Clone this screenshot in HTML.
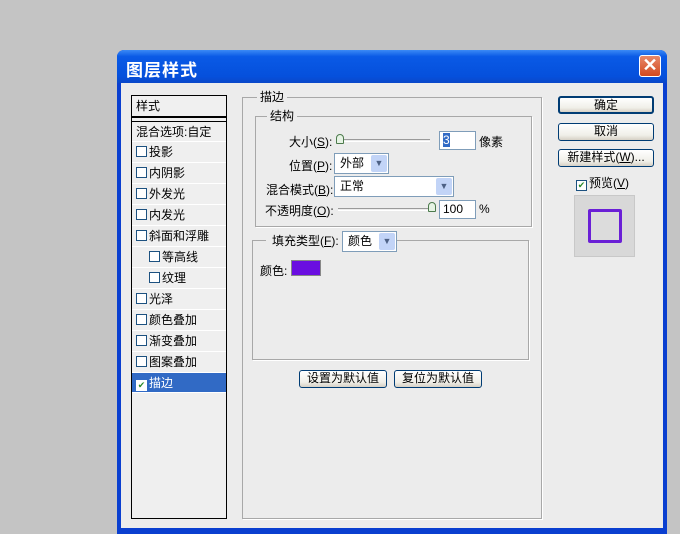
<!DOCTYPE html>
<html><head><meta charset="utf-8"><style>
*{margin:0;padding:0;box-sizing:border-box}
body{width:680px;height:532px;background:#c4c4c4;position:relative;overflow:hidden;font-family:"Liberation Sans","Noto Sans CJK SC",sans-serif;font-size:12px;color:#000}
.a{position:absolute}
.dlg{left:117px;top:50px;width:550px;height:484px;background:#0a3fd0;border-radius:7px 7px 0 0;}
.title{left:117px;top:50px;width:550px;height:33px;border-radius:7px 7px 0 0;background:linear-gradient(#3b8af5,#0a5ae6 20%,#0550dc 80%,#0a47c8);color:#fff;font-size:17px;font-weight:bold;padding:6px 0 0 9px;letter-spacing:1px}
.body{left:121px;top:83px;width:542px;height:445px;background:#ececec}
.close{left:639px;top:55px;width:22px;height:22px;border:1px solid #fff;border-radius:3px;background:linear-gradient(#e8886a,#d2491f);color:#fff;font-size:18px;line-height:19px;text-align:center;font-weight:bold}
.list{left:131px;top:95px;width:96px;height:424px;border:1px solid #000;background:#efefef}
.row{position:absolute;left:0;width:94px;height:21px;border-bottom:1px solid #fff;line-height:20px;padding-left:4px}
.cb{display:inline-block;width:11px;height:11px;border:1px solid #1c5180;background:#fff;vertical-align:-1px;margin-right:2px}
.grp{border:1px solid #a8a8a8;box-shadow:1px 1px 0 #fff}
.lbl{background:#ececec;padding:0 3px;position:absolute;line-height:14px}
.btn{position:absolute;border:1px solid #003c74;border-radius:3px;background:linear-gradient(#fff,#f0efe8 70%,#d6d0c5);text-align:center;line-height:15px;font-size:12px}
.sel{position:absolute;border:1px solid #7f9db9;background:#fff;height:21px;line-height:19px;padding-left:5px}
.arr{position:absolute;right:1px;top:1px;width:16px;height:17px;background:#c2d4f7;border-radius:2px;color:#4d6185;font-size:9px;text-align:center;line-height:17px}
.inp{position:absolute;border:1px solid #7f9db9;background:#fff;height:19px;line-height:17px;padding-left:3px}
.track{position:absolute;height:3px;border-top:1px solid #9a9a9a;border-bottom:1px solid #fff}
.thumb{position:absolute;width:8px;height:10px;border:1px solid #4c7a4c;background:#e6f3e4;border-radius:4px 4px 1px 1px}
</style></head><body>
<div class="a dlg"></div>
<div class="a title">图层样式</div>
<div class="a close">✕</div>
<div class="a body"></div>

<div class="a list">
 <div class="row" style="top:0;height:22px;border-bottom:2px solid #000;background:#f0f0f0">样式</div>
 <div class="row" style="top:25px;height:21px;border-top:1px solid #000">混合选项:自定</div>
 <div class="row" style="top:46px"><span class="cb"></span>投影</div>
 <div class="row" style="top:67px"><span class="cb"></span>内阴影</div>
 <div class="row" style="top:88px"><span class="cb"></span>外发光</div>
 <div class="row" style="top:109px"><span class="cb"></span>内发光</div>
 <div class="row" style="top:130px"><span class="cb"></span>斜面和浮雕</div>
 <div class="row" style="top:151px;padding-left:17px"><span class="cb"></span>等高线</div>
 <div class="row" style="top:172px;padding-left:17px"><span class="cb"></span>纹理</div>
 <div class="row" style="top:193px"><span class="cb"></span>光泽</div>
 <div class="row" style="top:214px"><span class="cb"></span>颜色叠加</div>
 <div class="row" style="top:235px"><span class="cb"></span>渐变叠加</div>
 <div class="row" style="top:256px"><span class="cb"></span>图案叠加</div>
 <div class="row" style="top:277px;height:20px;background:#316ac5;color:#fff"><span class="cb" style="border-color:#fff;color:#2a8a2a;font-size:9px;line-height:9px;text-align:center">✔</span>描边</div>
</div>

<div class="a grp" style="left:242px;top:97px;width:300px;height:422px"></div>
<div class="lbl" style="left:257px;top:90px">描边</div>
<div class="a grp" style="left:255px;top:116px;width:277px;height:111px"></div>
<div class="lbl" style="left:267px;top:109px">结构</div>

<div class="a" style="left:289px;top:133px">大小(<u>S</u>):</div>
<div class="track" style="left:340px;top:139px;width:90px"></div>
<div class="thumb" style="left:336px;top:134px"></div>
<div class="inp" style="left:439px;top:131px;width:37px"><span style="background:#316ac5;color:#fff">3</span></div>
<div class="a" style="left:479px;top:133px">像素</div>

<div class="a" style="left:289px;top:157px">位置(<u>P</u>):</div>
<div class="sel" style="left:334px;top:153px;width:55px">外部<div class="arr">▼</div></div>

<div class="a" style="left:266px;top:181px">混合模式(<u>B</u>):</div>
<div class="sel" style="left:334px;top:176px;width:120px">正常<div class="arr">▼</div></div>

<div class="a" style="left:265px;top:202px">不透明度(<u>O</u>):</div>
<div class="track" style="left:338px;top:208px;width:94px"></div>
<div class="thumb" style="left:428px;top:202px"></div>
<div class="inp" style="left:439px;top:200px;width:37px">100</div>
<div class="a" style="left:479px;top:202px">%</div>

<div class="a grp" style="left:252px;top:240px;width:277px;height:120px"></div>
<div class="lbl" style="left:266px;top:234px;padding:0 6px">填充类型(<u>F</u>):</div>
<div class="sel" style="left:342px;top:231px;width:55px">颜色<div class="arr">▼</div></div>
<div class="a" style="left:260px;top:262px">颜色:</div>
<div class="a" style="left:291px;top:260px;width:30px;height:16px;background:#6a0ee0;border:1px solid #888"></div>

<div class="btn" style="left:299px;top:370px;width:88px;height:18px">设置为默认值</div>
<div class="btn" style="left:394px;top:370px;width:88px;height:18px">复位为默认值</div>

<div class="btn" style="left:558px;top:96px;width:96px;height:18px;border-width:2px">确定</div>
<div class="btn" style="left:558px;top:123px;width:96px;height:18px">取消</div>
<div class="btn" style="left:558px;top:149px;width:96px;height:18px">新建样式(<u>W</u>)...</div>
<div class="a" style="left:576px;top:174px"><span class="cb" style="color:#2a8a2a;font-size:9px;line-height:9px;text-align:center">✔</span>预览(<u>V</u>)</div>
<div class="a" style="left:574px;top:195px;width:61px;height:62px;background:#d8d8d8;border:1px solid #c8c8c8"></div>
<div class="a" style="left:588px;top:209px;width:34px;height:34px;border:3px solid #6a1fd6;border-radius:2px;background:#dcdcdc"></div>
</body></html>
